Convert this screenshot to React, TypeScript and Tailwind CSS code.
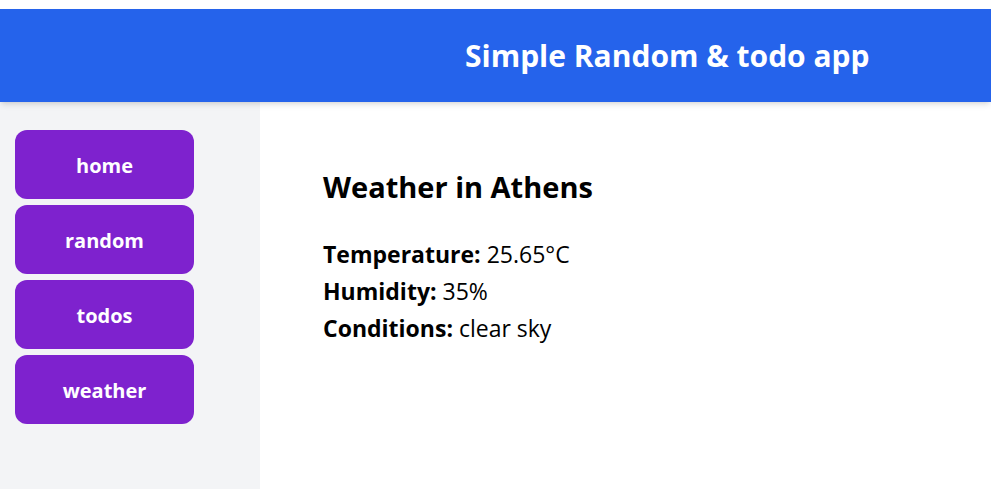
import React from 'react';

const links = ['home', 'random', 'todos', 'weather'];

const App: React.FC = () => {
  return (
    <div className="min-h-screen bg-white pt-[9px] font-['Open_Sans',sans-serif] text-black">
      {/* Header */}
      <header className="relative z-10 flex h-[93px] items-center bg-[#2563eb] pl-[465px] shadow-md">
        <h1 className="text-[30px] font-bold text-white">Simple Random &amp; todo app</h1>
      </header>

      <div className="flex h-[387px]">
        {/* Sidebar */}
        <aside className="flex w-[260px] flex-col gap-[6px] bg-[#f3f4f6] pl-[15px] pt-[28px]">
          {links.map(link => (
            <button
              key={link}
              className="flex h-[69px] w-[179px] items-center justify-center rounded-xl bg-[#7e22ce] pt-[2px] text-[20px] font-bold text-white"
            >
              {link}
            </button>
          ))}
        </aside>

        {/* Weather */}
        <main className="flex-1 pl-[63px] pt-[67px]">
          <h2 className="mb-[31px] text-[29px] font-bold leading-[36px]">Weather in Athens</h2>
          <div className="text-[23px] leading-[37px]">
            <p><span className="font-bold">Temperature:</span> 25.65°C</p>
            <p><span className="font-bold">Humidity:</span> 35%</p>
            <p><span className="font-bold">Conditions:</span> clear sky</p>
          </div>
        </main>
      </div>
    </div>
  );
};

export default App;
